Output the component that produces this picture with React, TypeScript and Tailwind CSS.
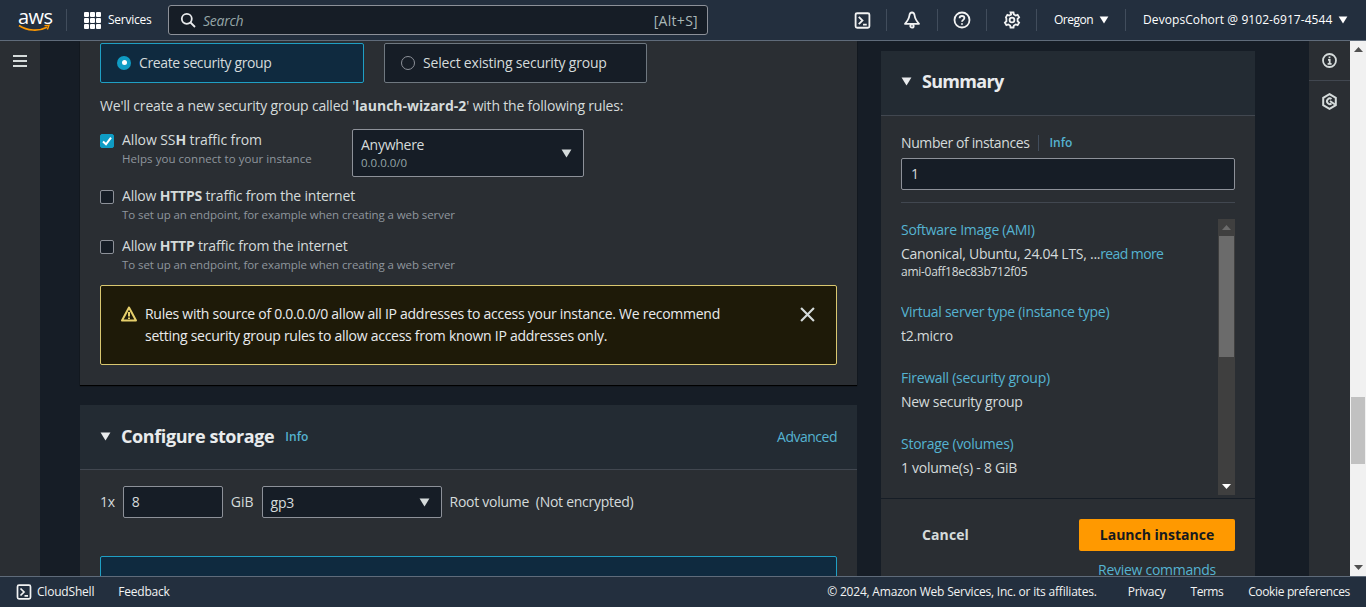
import React from "react";

const Caret = ({ className = "" }: { className?: string }) => (
  <svg viewBox="0 0 12 10" className={className} fill="currentColor"><path d="M0.5 0.5h11L6 9.5z" /></svg>
);

const Sep = () => <div className="w-px h-[22px] bg-[#414d5c]" />;

const TerminalIcon = ({ size = 16 }: { size?: number }) => (
  <svg width={size} height={size} viewBox="0 0 16 16" fill="none" stroke="currentColor" strokeWidth="1.7">
    <rect x="1.5" y="1.2" width="13" height="13.6" rx="1.5" />
    <path d="M4.5 4.5 8 8l-3.5 3.5M8.5 11.8h3.5" />
  </svg>
);

const Check = ({ label, bold, after, hint, labelClass = "tracking-[-0.2px]", hintClass = "tracking-[-0.08px]", checked = false }: { label: string; bold: string; after: string; hint: string; labelClass?: string; hintClass?: string; checked?: boolean }) => (
  <div className="flex gap-2">
    <div className={`w-[14px] h-[14px] mt-[4px] rounded-[2px] flex items-center justify-center border ${checked ? "bg-[#0f9cc4] border-[#0f9cc4]" : "bg-[#161d26] border-[#8d9199]"}`}>
      {checked && (
        <svg width="12" height="12" viewBox="0 0 12 12" fill="none" stroke="white" strokeWidth="2"><path d="M2 6.5 5 9.3 10 2.6" /></svg>
      )}
    </div>
    <div>
      <div className={`text-[14px] leading-[20px] text-[#d5dbdb] ${labelClass}`}>{label}<b className="font-bold">{bold}</b>{after}</div>
      <div className={`text-[11.5px] leading-[18px] text-[#8f969e] ${hintClass}`}>{hint}</div>
    </div>
  </div>
);

const SummaryItem = ({ title, value, sub, more }: { title: string; value: string; sub?: string; more?: string }) => (
  <div className="mb-[22px]">
    <div className="text-[14px] leading-[20px] text-[#55b3d1]">{title}</div>
    <div className="mt-[4px] text-[14px] leading-[20px] text-[#d5dbdb] whitespace-nowrap">{value}{more && <span className="text-[#55b3d1] tracking-[-0.6px]">{more}</span>}</div>
    {sub && <div className="text-[12px] leading-[16px] text-[#d5dbdb]">{sub}</div>}
  </div>
);

export default function App() {
  return (
    <div className="h-[607px] w-[1366px] overflow-hidden flex flex-col bg-[#161d26] text-[#d5dbdb] tracking-[-0.27px] font-['Open_Sans',sans-serif]">
      <header className="h-[41px] shrink-0 border-b border-[#5f6b7a] bg-[#232f3e] flex items-center text-white">
        <div className="w-[48px] ml-[18px] flex flex-col items-start relative">
          <span className="text-[20px] font-normal leading-[17px] tracking-[-0.6px]">aws</span>
          <svg width="32" height="9" viewBox="0 0 32 9" fill="none" className="-mt-[1px]">
            <path d="M1 1.5C9 7 21 7.5 29 3.2" stroke="#ff9900" strokeWidth="1.7" />
            <path d="M26.5 1.6 31 1.2 29.4 5.4" stroke="#ff9900" strokeWidth="1.4" />
          </svg>
        </div>
        <Sep />
        <div className="ml-[17px] grid grid-cols-3 gap-[1px] w-[17px]">
          {Array.from({ length: 9 }).map((_, i) => (
            <span key={i} className="w-[5px] h-[5px] bg-white rounded-[1px]" />
          ))}
        </div>
        <span className="ml-[7px] w-[60px] text-[12px] tracking-[-0.25px] whitespace-nowrap">Services</span>
        <div className="w-[540px] h-[30px] rounded-[3px] border border-[#8d9199] bg-[#161d26] flex items-center pl-[11px] pr-[9px]">
          <svg width="16" height="16" viewBox="0 0 16 16" fill="none" stroke="#e9ebed" strokeWidth="1.8"><circle cx="6.8" cy="6.8" r="5" /><path d="m10.5 10.5 4.5 4.5" /></svg>
          <span className="ml-[7px] italic text-[14px] text-[#95a5a6]">Search</span>
          <span className="ml-auto text-[14px] tracking-[0.3px] text-[#aab7b8]">[Alt+S]</span>
        </div>
        <div className="ml-[146px] flex items-center h-full text-[12px]">
          <div className="w-[17px] text-[#f2f3f3]"><TerminalIcon size={17} /></div>
          <div className="ml-[15px]"><Sep /></div>
          <svg className="ml-[16px]" width="18" height="18" viewBox="0 0 18 18" fill="none" stroke="#f2f3f3" strokeWidth="1.8"><path d="M9 1.500 C7.400 1.500 6.600 2.800 6.400 4.500 6 7.800 4 10.500 2 12.800h14c-2-2.300-4-5-4.400-8.300C11.400 2.800 10.600 1.500 9 1.500Z" strokeLinejoin="round" /><circle cx="9" cy="15" r="1.700" /></svg>
          <div className="ml-[16px]"><Sep /></div>
          <svg className="ml-[15px]" width="18" height="18" viewBox="0 0 18 18" fill="none" stroke="#f2f3f3" strokeWidth="1.8"><circle cx="9" cy="9" r="7.500" /><path d="M6.600 7.200C6.600 5.800 7.700 5 9 5s2.400.9 2.400 2.100c0 1.700-2.400 1.900-2.400 3.700" /><path d="M9 12.200v1.500" /></svg>
          <div className="ml-[15px]"><Sep /></div>
          <svg className="ml-[16px]" width="18" height="18" viewBox="0 0 18 18" fill="none" stroke="#f2f3f3" strokeWidth="1.8"><path d="M7.500 1.500h3l.4 2 1.800 1 1.900-.7 1.500 2.600-1.500 1.300v2.600l1.500 1.300-1.500 2.600-1.900-.7-1.800 1-.4 2h-3l-.4-2-1.800-1-1.900.7-1.500-2.600 1.500-1.300V7.700L2.900 6.400l1.500-2.600 1.900.7 1.800-1z" /><circle cx="9" cy="9" r="2.400" /></svg>
          <div className="ml-[15px]"><Sep /></div>
          <span className="ml-[17px] tracking-[-0.5px]">Oregon</span>
          <Caret className="ml-[6px] w-[10px] h-[8px]" />
          <div className="ml-[16px]"><Sep /></div>
          <span className="ml-[17px] tracking-[0.07px] whitespace-nowrap">DevopsCohort @ 9102-6917-4544</span>
          <Caret className="ml-[6px] w-[10px] h-[8px]" />
        </div>
      </header>

      <div className="flex-1 min-h-0 flex">
        <aside className="w-10 shrink-0 bg-[#2a2e33] pt-[14px] flex justify-center">
          <svg width="14" height="12" viewBox="0 0 14 12" stroke="#d5dbdb" strokeWidth="2"><path d="M0 1h14M0 6h14M0 11h14" /></svg>
        </aside>

        <main className="flex-1 min-w-0 flex overflow-hidden pl-10">
          <div className="w-[777px] shrink-0 flex flex-col gap-[20px]">
            <section className="h-[344px] shrink-0 bg-[#2a2e33] px-[20px] pt-[2px] shadow-[0_1px_1px_#000]">
              <div className="flex gap-[20px]">
                <div className="w-[264px] h-[40px] rounded-[2px] border border-[#1f9fc4] bg-[#0f2a3f] flex items-center pl-[16px] pb-[1px]">
                  <span className="w-[14px] h-[14px] rounded-full bg-[#0f9cc4] flex items-center justify-center"><span className="w-[5px] h-[5px] rounded-full bg-white" /></span>
                  <span className="ml-[8px] text-[14px] tracking-[-0.37px] text-[#d5dbdb]">Create security group</span>
                </div>
                <div className="w-[263px] h-[40px] rounded-[2px] border border-[#6f7880] bg-[#161d26] flex items-center pl-[16px] pb-[1px]">
                  <span className="w-[14px] h-[14px] rounded-full border border-[#8d9199]" />
                  <span className="ml-[8px] text-[14px] tracking-[-0.2px] text-[#d5dbdb]">Select existing security group</span>
                </div>
              </div>
              <p className="mt-[13px] text-[14px] leading-[20px] tracking-[-0.2px] text-[#d5dbdb]">We'll create a new security group called '<b className="font-bold tracking-[0px]">launch-wizard-2</b>' with the following rules:</p>
              <div className="mt-[13px] flex">
                <div className="w-[252px] pt-[1px]">
                  <Check label="Allow SS" bold="H" after=" traffic from" hint="Helps you connect to your instance" labelClass="tracking-[-0.1px]" hintClass="tracking-[0.05px]" checked />
                </div>
                <div className="w-[232px] h-[48px] rounded-[2px] border border-[#8d9199] bg-[#161d26] pl-[8px] pr-[11px] pt-[2px] flex items-center justify-between">
                  <div>
                    <div className="text-[14px] leading-[18px] text-[#d5dbdb]">Anywhere</div>
                    <div className="text-[11.5px] leading-[18px] tracking-[0px] text-[#95a5a6]">0.0.0.0/0</div>
                  </div>
                  <Caret className="w-[11px] h-[9px] text-[#d5dbdb] -mt-[2px]" />
                </div>
              </div>
              <div className="mt-[9px]"><Check label="Allow " bold="HTTPS" after=" traffic from the internet" hint="To set up an endpoint, for example when creating a web server" /></div>
              <div className="mt-[12px]"><Check label="Allow " bold="HTTP" after=" traffic from the internet" hint="To set up an endpoint, for example when creating a web server" /></div>
              <div className="mt-[11px] h-[80px] rounded-[2px] border border-[#d9c770] bg-[#1e1a08] flex pl-[20px] pr-[21px] pt-[17px]">
                <svg className="mt-[3px]" width="16" height="16" viewBox="0 0 16 16" fill="none" stroke="#e6cf6b" strokeWidth="2"><path d="M8 1.500 1 14.500h14z" strokeLinejoin="round" /><path d="M8 6v4.500M8 11.500v1.500" /></svg>
                <p className="ml-[8px] w-[620px] text-[14px] leading-[22px] text-[#e9ebed]">Rules with source of 0.0.0.0/0 allow all IP addresses to access your instance. We recommend setting security group rules to allow access from known IP addresses only.</p>
                <svg className="ml-auto mt-[4px]" width="15" height="15" viewBox="0 0 14 14" stroke="#d5dbdb" strokeWidth="2"><path d="m1 1 12 12M13 1 1 13" /></svg>
              </div>
            </section>

            <section className="flex-1 bg-[#2a2e33]">
              <div className="h-[65px] bg-[#232b33] border-b border-[#414750] px-[20px] pb-[2px] flex items-center">
                <Caret className="w-[11px] h-[9px] text-[#e9ebed]" />
                <h2 className="ml-[10px] text-[18px] font-bold tracking-[-0.4px] text-[#e9ebed]">Configure storage</h2>
                <span className="ml-[11px] mt-[2px] text-[12px] tracking-[0px] font-semibold text-[#55b3d1]">Info</span>
                <span className="ml-auto mt-[1px] text-[14px] tracking-[-0.5px] text-[#55b3d1]">Advanced</span>
              </div>
              <div className="mt-[16px] px-[20px] flex items-center text-[14px]">
                <span className="pb-[2px]">1x</span>
                <div className="ml-[8px] w-[100px] h-[32px] rounded-[2px] border border-[#8d9199] bg-[#161d26] pl-[8px] pb-[2px] flex items-center">8</div>
                <span className="ml-[8px] pb-[2px] tracking-[0px]">GiB</span>
                <div className="ml-[8px] w-[180px] h-[32px] rounded-[2px] border border-[#8d9199] bg-[#161d26] px-[8px] pr-[11px] flex items-center justify-between">gp3<Caret className="w-[11px] h-[9px]" /></div>
                <span className="ml-[8px] pb-[2px] whitespace-pre">Root volume  (Not encrypted)</span>
              </div>
              <div className="mx-[20px] mt-[38px] h-[40px] rounded-t-[2px] border border-[#1f9fc4] bg-[#0f2a3f]" />
            </section>
          </div>

          <div className="ml-[24px] w-[374px] shrink-0 mt-[10px] bg-[#2a2e33] flex flex-col">
            <div className="h-[65px] shrink-0 bg-[#232b33] border-b border-[#414750] flex items-center pl-[20px] pb-[3px]">
              <Caret className="w-[11px] h-[9px] text-[#e9ebed]" />
              <h2 className="ml-[10px] text-[18px] font-bold tracking-[-0.7px] text-[#e9ebed]">Summary</h2>
            </div>
            <div className="px-[20px] pt-[17px]">
              <div className="flex items-center text-[14px] leading-[20px]">
                <span className="tracking-[-0.4px]">Number of instances</span>
                <span className="ml-[9px] w-px h-[16px] bg-[#414d5c]" />
                <span className="ml-[10px] text-[12px] tracking-[0px] font-semibold text-[#55b3d1]">Info</span>
              </div>
              <div className="mt-[5px] h-[32px] rounded-[2px] border border-[#8d9199] bg-[#161d26] pl-[9px] pb-[1px] flex items-center text-[14px]">1</div>
              <div className="mt-[12px] h-px bg-[#414750]" />
              <div className="mt-[16px] h-[276px] flex overflow-hidden">
                <div className="flex-1 min-w-0 overflow-hidden pt-[1px]">
                  <SummaryItem title="Software Image (AMI)" value="Canonical, Ubuntu, 24.04 LTS, ..." more="read more" sub="ami-0aff18ec83b712f05" />
                  <SummaryItem title="Virtual server type (instance type)" value="t2.micro" />
                  <SummaryItem title="Firewall (security group)" value="New security group" />
                  <SummaryItem title="Storage (volumes)" value="1 volume(s) - 8 GiB" />
                </div>
                <div className="w-[17px] shrink-0 bg-[#3f3f3f] flex flex-col items-center">
                  <svg className="mt-[6px]" width="9" height="5" viewBox="0 0 9 5" fill="#6b6b6b"><path d="M0 5h9L4.500 0z" /></svg>
                  <div className="mt-[6px] w-[15px] h-[121px] bg-[#6b6b6b]" />
                  <svg className="mt-auto mb-[6px]" width="9" height="5" viewBox="0 0 9 5" fill="#ffffff"><path d="M0 0h9L4.500 5z" /></svg>
                </div>
              </div>
            </div>
            <div className="mt-[3px] flex-1 border-t border-[#161d26] px-[20px] pt-[20px] relative">
              <div className="flex items-center">
                <span className="ml-[21px] pb-[1px] text-[14px] font-bold tracking-[0.1px] text-[#d5dbdb]">Cancel</span>
                <div className="ml-auto w-[156px] h-[32px] rounded-[2px] bg-[#ff9900] pb-[1px] flex items-center justify-center text-[14px] font-bold tracking-[0px] text-[#16191f]">Launch instance</div>
              </div>
              <div className="mt-[9px] text-right pr-[19px] text-[14px] leading-[20px] text-[#55b3d1]">Review commands</div>
            </div>
          </div>
        </main>

        <aside className="w-[41px] shrink-0 bg-[#2a2e33]">
          <div className="h-[40px] border-b border-[#414750] flex items-center justify-center">
            <svg width="15" height="15" viewBox="0 0 15 15" fill="none" stroke="#d5dbdb" strokeWidth="1.800"><circle cx="7.500" cy="7.500" r="6.500" /><path d="M7.500 3.500v1.800M6 6.800h1.700v3.500M5.600 10.800h4" /></svg>
          </div>
          <div className="h-[41px] flex items-center justify-center">
            <svg width="15" height="17" viewBox="0 0 15 17" fill="none" stroke="#d5dbdb" strokeWidth="2"><path d="M7.500 1.200 13.800 4.800v7.400L7.500 15.800 1.200 12.200V4.800z" /><path d="M9.500 6A2.800 2.800 0 1 0 9.500 10.500" /><path d="m8 8 5 3.500" /></svg>
          </div>
        </aside>

        <div className="w-4 shrink-0 bg-[#f1f1f1] relative flex flex-col items-center">
          <svg className="mt-[6px]" width="9" height="5" viewBox="0 0 9 5" fill="#505050"><path d="M0 5h9L4.500 0z" /></svg>
          <div className="absolute top-[356px] left-[1px] w-[14px] h-[67px] bg-[#c1c1c1]" />
          <svg className="mt-auto mb-[6px]" width="9" height="5" viewBox="0 0 9 5" fill="#505050"><path d="M0 0h9L4.500 5z" /></svg>
        </div>
      </div>

      <footer className="h-[31px] shrink-0 border-t border-[#5f6b7a] bg-[#232f3e] flex items-center text-[12px] text-[#f2f3f3] pl-[16px] pr-[16px] tracking-[-0.2px]">
        <TerminalIcon size={16} />
        <span className="ml-[5px]">CloudShell</span>
        <span className="ml-[24px]">Feedback</span>
        <span className="ml-auto">© 2024, Amazon Web Services, Inc. or its affiliates.</span>
        <span className="ml-[31px] tracking-[-0.25px]">Privacy</span>
        <span className="ml-[25px] tracking-[-0.5px]">Terms</span>
        <span className="ml-[25px] tracking-[-0.35px]">Cookie preferences</span>
      </footer>
    </div>
  );
}
